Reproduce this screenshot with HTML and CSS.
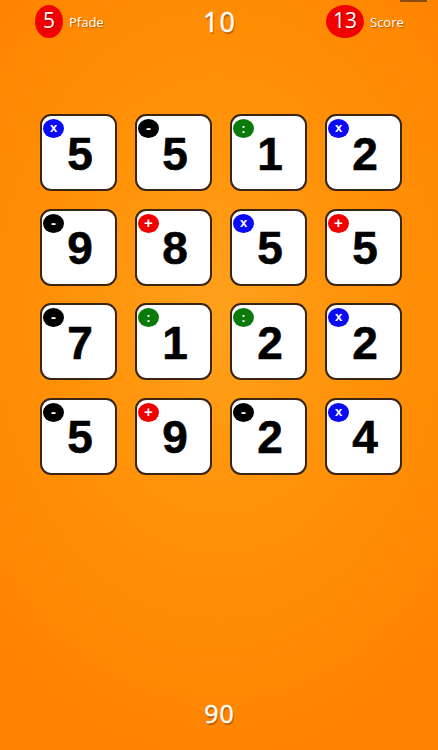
FILE: index.html
```html
<!DOCTYPE html>
<html lang="de">
<head>
<meta charset="utf-8">
<title>Pfade</title>
<link rel="stylesheet" href="styles.css">
</head>
<body>
<div class="app">
  <div class="topmark"></div>
  <header class="hud">
    <div class="hud-left">
      <span class="pill">5</span><span class="label">Pfade</span>
    </div>
    <div class="hud-center">10</div>
    <div class="hud-right">
      <span class="pill pill-wide">13</span><span class="label">Score</span>
    </div>
  </header>

  <main class="board">
    <div class="card"><span class="op op-mul">x</span><span class="num">5</span></div>
    <div class="card"><span class="op op-sub">-</span><span class="num">5</span></div>
    <div class="card"><span class="op op-div">:</span><span class="num">1</span></div>
    <div class="card"><span class="op op-mul">x</span><span class="num">2</span></div>

    <div class="card"><span class="op op-sub">-</span><span class="num">9</span></div>
    <div class="card"><span class="op op-add">+</span><span class="num">8</span></div>
    <div class="card"><span class="op op-mul">x</span><span class="num">5</span></div>
    <div class="card"><span class="op op-add">+</span><span class="num">5</span></div>

    <div class="card"><span class="op op-sub">-</span><span class="num">7</span></div>
    <div class="card"><span class="op op-div">:</span><span class="num">1</span></div>
    <div class="card"><span class="op op-div">:</span><span class="num">2</span></div>
    <div class="card"><span class="op op-mul">x</span><span class="num">2</span></div>

    <div class="card"><span class="op op-sub">-</span><span class="num">5</span></div>
    <div class="card"><span class="op op-add">+</span><span class="num">9</span></div>
    <div class="card"><span class="op op-sub">-</span><span class="num">2</span></div>
    <div class="card"><span class="op op-mul">x</span><span class="num">4</span></div>
  </main>

  <footer class="timer">90</footer>
</div>
</body>
</html>
```

FILE: styles.css
```css
html, body {
  margin: 0;
  padding: 0;
}

body {
  width: 438px;
  height: 750px;
  overflow: hidden;
  background: radial-gradient(ellipse 75% 60% at 50% 42%, #ffa11c 0%, #ff9208 45%, #ff8300 100%);
  font-family: "Open Sans", "DejaVu Sans", sans-serif;
  color: #fff;
}

.app {
  position: relative;
  height: 750px;
  display: flex;
  flex-direction: column;
}

.topmark {
  position: absolute;
  top: 0;
  left: 400px;
  width: 27px;
  height: 2px;
  background: #8a4b12;
}

.hud {
  display: grid;
  grid-template-columns: 146px 146px 146px;
  align-items: center;
  padding-top: 5px;
  height: 33px;
}

.hud-left {
  display: flex;
  align-items: center;
  padding-left: 35px;
}

.hud-right {
  display: flex;
  align-items: center;
  padding-left: 34px;
}

.hud-center {
  text-align: center;
  font-size: 27px;
  line-height: 33px;
  padding-left: 1px;
  letter-spacing: 1px;
  -webkit-text-stroke: 0.4px #fff;
  text-shadow: 1px 2px 1px rgba(120, 50, 0, 0.55);
}

.pill {
  display: flex;
  align-items: center;
  justify-content: center;
  width: 28px;
  height: 33px;
  border-radius: 50%;
  background: #f20000;
  font-size: 21px;
  line-height: 1;
  padding-bottom: 3px;
  box-sizing: border-box;
  text-shadow: 1px 1px 1px rgba(90, 0, 0, 0.5);
}

.pill-wide {
  width: 38px;
}

.label {
  font-size: 13px;
  margin-left: 6px;
  padding-top: 1px;
  text-shadow: 1px 1px 1px rgba(120, 50, 0, 0.5);
}

.board {
  display: grid;
  grid-template-columns: repeat(4, 77px);
  grid-auto-rows: 77px;
  column-gap: 18px;
  row-gap: 17.5px;
  padding-left: 40px;
  margin-top: 76px;
}

.card {
  position: relative;
  box-sizing: border-box;
  background: #fff;
  border: 2px solid #3a2414;
  border-radius: 11px;
  display: flex;
  align-items: center;
  justify-content: center;
  padding-left: 3px;
  padding-top: 2px;
}

.num {
  font-family: "Liberation Sans", Arial, sans-serif;
  font-weight: bold;
  font-size: 46px;
  line-height: 1;
  color: #000;
  -webkit-text-stroke: 0.6px #000;
}

.op {
  position: absolute;
  top: 3px;
  left: 1px;
  width: 21px;
  height: 19px;
  border-radius: 50%;
  display: flex;
  align-items: center;
  justify-content: center;
  font-family: "Liberation Sans", Arial, sans-serif;
  font-weight: bold;
  color: #fff;
  font-size: 13px;
  line-height: 1;
  box-sizing: border-box;
}

.op-mul { background: #0a0af5; padding-bottom: 2px; }
.op-sub { background: #000; font-size: 15px; padding-bottom: 2px; }
.op-div { background: #0a7a0a; padding-bottom: 1px; }
.op-add { background: #f20000; font-size: 15px; padding-bottom: 2px; }

.timer {
  margin-top: auto;
  text-align: center;
  font-size: 25px;
  line-height: 1;
  letter-spacing: 1px;
  padding-bottom: 24px;
  padding-left: 1px;
  -webkit-text-stroke: 0.4px #fff;
  text-shadow: 1px 2px 1px rgba(120, 50, 0, 0.5);
}
```
